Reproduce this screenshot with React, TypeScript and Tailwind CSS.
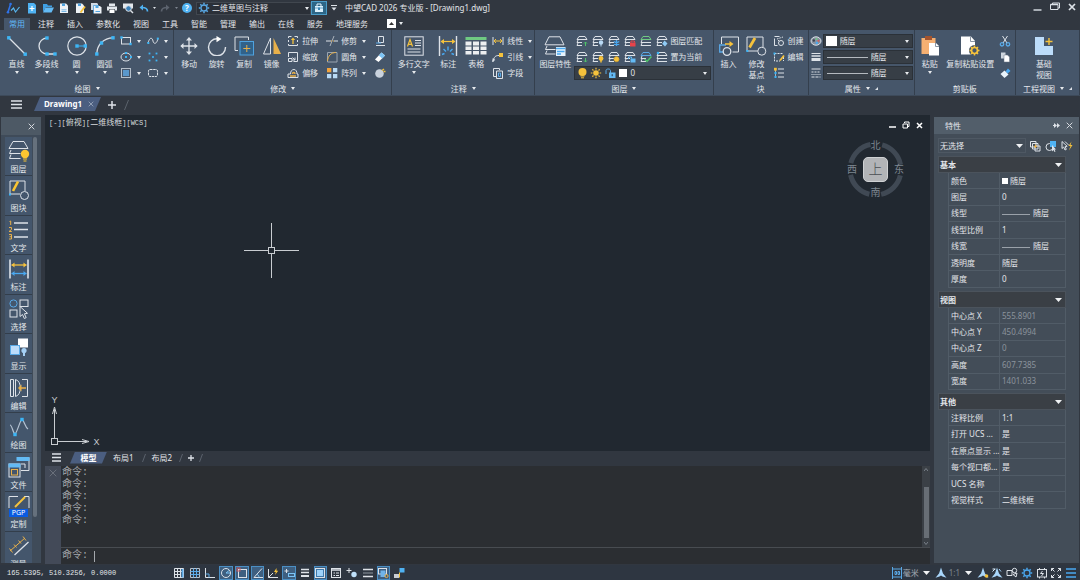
import React from 'react';

type Kids = { children?: React.ReactNode };

const W = '#dde2e8';
const B = '#3db5f5';
const L = '#5aa9e6';
const Y = '#f5c23c';
const O = '#e8b04a';

function Ic({ w, h, children }: Kids & { w: number; h?: number }) {
  const hh = h ?? w;
  return (
    <svg width={w} height={hh} viewBox={`0 0 ${w} ${hh}`} fill="none" stroke={W} strokeWidth="1" className="shrink-0" aria-hidden="true">
      {children}
    </svg>
  );
}

const Down = () => (
  <svg width="4" height="3" viewBox="0 0 4 3" className="shrink-0" aria-hidden="true">
    <path d="M0 0h4L2 3z" fill="#e8ebee" />
  </svg>
);
const DownBig = () => (
  <svg width="7" height="4" viewBox="0 0 7 4" className="shrink-0" aria-hidden="true">
    <path d="M0 0h7L3.5 4z" fill="#f0f2f4" />
  </svg>
);
const Dot = ({ x, y, s = 3.4 }: { x: number; y: number; s?: number }) => (
  <rect x={x - s / 2} y={y - s / 2} width={s} height={s} fill={B} stroke="none" />
);
const Burger = ({ w = 11 }: { w?: number }) => (
  <Ic w={w} h={9}><path d={`M0 1h${w}M0 4.5h${w}M0 8h${w}`} strokeWidth="1.3" /></Ic>
);
const Close = ({ s = 7, c = '#d5d9de' }: { s?: number; c?: string }) => (
  <Ic w={s}><path d={`M.7.7L${s - 0.7} ${s - 0.7}M${s - 0.7}.7L.7 ${s - 0.7}`} stroke={c} /></Ic>
);
const rays = 'M6 .8v1.700M6 9.500v1.700M.8 6h1.700M9.500 6h1.700M2.300 2.300l1.200 1.200M8.500 8.500l1.200 1.200M9.700 2.300L8.500 3.500M3.500 8.500L2.300 9.700';
const Gear = ({ c = L }: { c?: string }) => (
  <Ic w={12}><circle cx="6" cy="6" r="3" stroke={c} strokeWidth="1.300" /><path d={rays} stroke={c} strokeWidth="1.500" /></Ic>
);

/* ---------- ribbon building blocks ---------- */

function Big({ w, label, arrow, children }: Kids & { w: string; label: string[]; arrow?: boolean }) {
  return (
    <button type="button" className={`flex shrink-0 flex-col items-center pt-[3px] ${w}`}>
      {children}
      <span className="mt-[2px] flex flex-col leading-[11px]">
        {label.map((t) => <span key={t}>{t}</span>)}
      </span>
      {arrow && <span className="mt-[2px]"><Down /></span>}
    </button>
  );
}

function Small({ label, name, arrow, children }: Kids & { label?: string; name?: string; arrow?: boolean }) {
  return (
    <button type="button" aria-label={label ?? name} className="flex h-4 shrink-0 items-center gap-[3px] px-[2px]">
      {children}
      {label && <span>{label}</span>}
      {arrow && <span className="pl-[2px]"><Down /></span>}
    </button>
  );
}

function Group({ basis, title, arrow, corner, children }: Kids & { basis: string; title: string; arrow?: boolean; corner?: boolean }) {
  return (
    <section aria-label={title} className={`flex shrink-0 grow flex-col border-r border-[#343f4d] pt-[3px] ${basis}`}>
      <div className="flex h-12 pl-px">{children}</div>
      <div className="flex h-[14px] items-center justify-center gap-[5px] pt-px">
        <span>{title}</span>
        {arrow && <Down />}
        {corner && <Ic w={3}><path d="M3 0v3H0z" fill={W} stroke="none" /></Ic>}
      </div>
    </section>
  );
}
const Col = ({ w = '', children }: Kids & { w?: string }) => <div className={`flex shrink-0 flex-col ${w}`}>{children}</div>;

/* Layer stack in a 12 x 12 box, with room for a badge at the lower right */
const Stack = ({ name, top = W, children }: Kids & { name: string; top?: string }) => (
  <button type="button" aria-label={name} className="flex h-4 w-4 items-center justify-center">
    <Ic w={12}>
      <path d="M3 1.500h6l2 3H1z" stroke={top} />
      <path d="M2 5L1 7.500h5M2 8L1 10.500h5" stroke={W} />
      {children}
    </Ic>
  </button>
);

function Combo({ label, value, children }: Kids & { label: string; value: string }) {
  return (
    <label className="flex h-[14px] min-w-0 grow items-center gap-[3px] border border-[#2b3138] bg-[#373e46] px-[3px]">
      {children}
      <select aria-label={label} defaultValue={value} className="min-w-0 grow appearance-none bg-transparent text-[8px] leading-[10px] text-[#e3e6ea] outline-none">
        <option>{value}</option>
      </select>
      <Down />
    </label>
  );
}

/* ---------- title bar ---------- */

function TitleBar() {
  return (
    <header className="flex h-4 shrink-0 items-center justify-between">
      <div className="flex items-center">
        <div className="flex w-[26px] justify-center">
          <Ic w={14} h={12}>
            <path d="M2 10L4.500 2.500" stroke="#2f73e8" strokeWidth="1.6" />
            <path d="M5 8.500L7.500 6l2 4L13.500 5" stroke="#58b7f0" strokeWidth="1.2" />
            <circle cx="2" cy="10.300" r="1.300" fill="#2f73e8" stroke="none" />
            <circle cx="4.600" cy="2" r="1.300" fill="#2f73e8" stroke="none" />
          </Ic>
        </div>
        <div className="flex items-center gap-1">
          <button type="button" aria-label="新建"><Ic w={12}><path d="M2 1h6l2 2v8.500H2z" fill="#4fb2f2" stroke="none" /><path d="M6 4v5M3.500 6.500h5" stroke="#fff" strokeWidth="1.200" /></Ic></button>
          <button type="button" aria-label="打开"><Ic w={12}><path d="M1 10V2h4l1 1.500h4V5H4z" fill="#3e9fe4" stroke="none" /><path d="M3.500 5.500H12L9.500 10.500H1z" fill="#63baf4" stroke="none" /></Ic></button>
          <button type="button" aria-label="保存"><Ic w={12}><path d="M2 1.500h6l2 2v7.500H2z" fill="#eef2f6" stroke="none" /><path d="M4 1.500h3v2.500H4zM3.500 7.500h5v.8h-5zM3.500 9h5v.8h-5z" fill="#4fa3e0" stroke="none" /></Ic></button>
          <button type="button" aria-label="另存为"><Ic w={12}><path d="M2 1.500h6l2 2v7.500H2z" fill="#eef2f6" stroke="none" /><path d="M4 1.500h3v2.500H4z" fill="#4fa3e0" stroke="none" /><path d="M11 4.500L6.500 10.500" stroke={Y} strokeWidth="1.800" /></Ic></button>
          <button type="button" aria-label="全部保存"><Ic w={12}><path d="M1 1h6l1 1v6H1z" fill="#cfd9e4" stroke="none" /><path d="M4 4h6l1.500 1.500v6H4z" fill="#eef2f6" stroke="none" /><path d="M5.500 4h3v2h-3zM5.500 9h4.500v1H5.500z" fill="#4fa3e0" stroke="none" /><path d="M3.500 11.500v-8H9" stroke="#4fa3e0" strokeWidth=".8" /></Ic></button>
          <button type="button" aria-label="打印"><Ic w={12}><path d="M3 1.500h6V4H3zM1 4.500h10v4H9V7H3v1.500H1z" fill="#e3e7ec" stroke="none" /><path d="M3.500 7.500h5v3.500h-5z" fill="#fff" stroke="none" /></Ic></button>
          <button type="button" aria-label="打印预览"><Ic w={12}><path d="M1 1.500h10v5H1z" fill="#e3e7ec" stroke="none" /><circle cx="6.500" cy="6.500" r="2.800" fill="#3b7fb8" /><path d="M8.500 8.500l2.500 2.500" strokeWidth="1.400" /></Ic></button>
          <button type="button" aria-label="放弃" className="flex items-center gap-1"><Ic w={11} h={12}><path d="M9.500 9.500C9.500 6.500 7.500 5.500 4 5.500" stroke="#4fb2f2" strokeWidth="1.700" /><path d="M5 2.500L1.500 5.500l3.500 3z" fill="#4fb2f2" stroke="none" /></Ic><Ic w={3} h={2}><path d="M0 0h3L1.500 2z" fill={W} stroke="none" /></Ic></button>
          <button type="button" aria-label="重做" className="flex items-center gap-1"><Ic w={11} h={12}><path d="M1.500 9.500C1.500 6.500 3.500 5.500 7 5.500" stroke="#5c636e" strokeWidth="1.700" /><path d="M6 2.500L9.500 5.500 6 8.500z" fill="#5c636e" stroke="none" /></Ic><Ic w={3} h={2}><path d="M0 0h3L1.500 2z" fill="#7d848e" stroke="none" /></Ic></button>
          <button type="button" aria-label="帮助" className="flex h-[10px] w-[10px] items-center justify-center rounded-full bg-[#4fb2f2] text-[8px] font-bold leading-none text-white">?</button>
          <label className="flex h-[13px] w-[115px] items-center gap-[2px] border border-[#41474f] bg-[#2b3038] px-px">
            <Gear />
            <select aria-label="工作空间" defaultValue="二维草图与注释" className="min-w-0 grow appearance-none bg-transparent text-[8px] leading-[10px] outline-none">
              <option>二维草图与注释</option>
            </select>
            <Down />
          </label>
        </div>
        <button type="button" aria-label="工具箱" className="flex h-[14px] w-4 items-center justify-center border border-[#4a9cc8] bg-[#2d6687]">
          <Ic w={10}><path d="M3 3V1h4v2" stroke="#e8f6ff" /><path d="M1 3h8v6H1z" fill="#d8effc" stroke="none" /><path d="M1 5h8" stroke="#3a86b5" strokeWidth=".7" /><path d="M4 4.500h2V7H4z" fill="#3a86b5" stroke="none" /></Ic>
        </button>
        <button type="button" aria-label="自定义" className="flex w-[18px] flex-col items-center pr-2 pl-[3px]"><Ic w={6} h={6}><path d="M0 .5h6" /><path d="M.5 2.500h5L3 5.500z" fill={W} stroke="none" /></Ic></button>
        <h1 className="text-[8px]">中望CAD 2026 专业版 - [Drawing1.dwg]</h1>
      </div>
      <div className="flex items-center gap-2 pr-1 pb-[3px]">
        <button type="button" aria-label="最小化"><Ic w={9}><path d="M.5 8h8" strokeWidth="1.400" /></Ic></button>
        <button type="button" aria-label="还原"><Ic w={10} h={9}><path d="M2.500 2.500V1H9.500v5H8M.5 2.500h7.500v5H.5z" /><path d="M.5 2.500h7.500" strokeWidth="1.500" /></Ic></button>
        <button type="button" aria-label="关闭"><Ic w={8}><path d="M1 1l6 6M7 1L1 7" strokeWidth="1.700" /></Ic></button>
      </div>
    </header>
  );
}

const TABS = ['常用', '注释', '插入', '参数化', '视图', '工具', '智能', '管理', '输出', '在线', '服务', '地理服务'];

function RibbonTabs() {
  return (
    <nav className="flex h-[14px] shrink-0 items-end gap-[3px] pl-1">
      {TABS.map((t, i) => (
        <button key={t} type="button" className={i === 0 ? 'h-3 bg-[#46566a] px-[5px] leading-3 text-[#5fb8f7]' : 'h-3 px-[5px] leading-3'}>{t}</button>
      ))}
      <button type="button" aria-label="最小化功能区" className="ml-[11px] flex items-center gap-[3px] pb-[2px]">
        <Ic w={9} h={9}><rect width="9" height="9" fill="#fff" stroke="none" /><path d="M4.500 3L7 6H2z" fill="#333" stroke="none" /></Ic>
        <Down />
      </button>
    </nav>
  );
}

/* ---------- ribbon ---------- */

function Ribbon() {
  return (
    <div className="flex h-[66px] shrink-0 border-b border-[#3d4a5a] bg-[#46566a] pl-px">
      <Group basis="basis-[173px]" title="绘图" arrow>
        <Big w="w-[29px]" label={['直线']} arrow><Ic w={20}><path d="M1.500 1.500l17 17" strokeWidth="1.300" /><Dot x={1.8} y={1.8} /><Dot x={18.2} y={18.2} /></Ic></Big>
        <Big w="w-[31px]" label={['多段线']} arrow><Ic w={20}><path d="M10 2A8 8 0 0 0 10 18H18" strokeWidth="1.300" /><Dot x={10} y={2} /><Dot x={10} y={18} /><Dot x={18} y={18} /></Ic></Big>
        <Big w="w-[29px]" label={['圆']} arrow><Ic w={20}><circle cx="10" cy="10" r="9.200" strokeWidth="1.200" /><path d="M10 10h8" stroke={B} /><Dot x={10} y={10} /><Dot x={18.3} y={10} /></Ic></Big>
        <Big w="w-[27px]" label={['圆弧']} arrow><Ic w={20}><path d="M1.800 18C2 8 9 2 18 1.800" strokeWidth="1.300" /><Dot x={1.8} y={18} /><Dot x={6.5} y={7} /><Dot x={18} y={1.8} /></Ic></Big>
        <Col w="w-[27px]">
          <Small name="矩形" arrow><Ic w={12}><rect x="1.500" y="2.500" width="9" height="6.500" /><Dot x={1.5} y={2.5} s={2.4} /><Dot x={10.5} y={9} s={2.4} /></Ic></Small>
          <Small name="椭圆" arrow><Ic w={12}><ellipse cx="6" cy="6" rx="5" ry="4" /><Dot x={6} y={6} s={2} /><Dot x={6} y={2} s={2} /><Dot x={11} y={6} s={2} /></Ic></Small>
          <Small name="填充" arrow><Ic w={12}><rect x="1.500" y="1.500" width="9" height="9" stroke="#b6c0cb" /><rect x="3" y="3" width="6" height="6" fill="#5a98cc" stroke="none" /></Ic></Small>
        </Col>
        <Col>
          <Small name="样条曲线" arrow><Ic w={12}><path d="M1 8C3 1 5.500 3 6 6S9.500 10 11 3.500" /><Dot x={1.3} y={8} s={2} /><Dot x={10.800} y={3.600} s={2} /></Ic></Small>
          <Small name="点" arrow><Ic w={12}><Dot x={2.5} y={2.500} s={1.800} /><Dot x={6} y={6} s={1.800} /><Dot x={9.500} y={2.500} s={1.800} /><Dot x={2.500} y={9.500} s={1.800} /><Dot x={9.500} y={9.500} s={1.800} /></Ic></Small>
          <Small name="修订云线" arrow><Ic w={12}><rect x="1.500" y="2.500" width="9" height="7" rx="1.500" strokeDasharray="2.500 .7" /></Ic></Small>
        </Col>
      </Group>

      <Group basis="basis-[218px]" title="修改" arrow>
        <Big w="w-[28px]" label={['移动']}><Ic w={18} h={20}><path d="M9 2.500v15M1.500 10h15" strokeWidth="1.300" /><path d="M6 4.500L9 1l3 3.500zM6 15.500L9 19l3-3.500zM3.500 7L.3 10l3.200 3zM14.500 7l3.200 3-3.200 3z" fill={W} stroke="none" /></Ic></Big>
        <Big w="w-[27px]" label={['旋转']}><Ic w={20}><path d="M10.500 2.800A8.500 8.500 0 1 0 18.500 11" strokeWidth="1.400" /><path d="M9.500 0l5 3-5 3.200z" fill="#fff" stroke="none" /></Ic></Big>
        <Big w="w-[28px]" label={['复制']}><Ic w={20}><path d="M4 14.500H1V1h13.500v3" /><rect x="6" y="5.500" width="13.500" height="13.500" fill="#31628a" stroke="#4fa3e0" /><path d="M12.800 9v7M9.300 12.500h7" stroke={O} /></Ic></Big>
        <Big w="w-[27px]" label={['镜像']}><Ic w={20}><path d="M8.500 2v16h-7z" /><path d="M11.500 2v16h7.500z" fill={O} stroke="none" /></Ic></Big>
        <Col w="w-[39px]">
          <Small label="拉伸"><Ic w={12}><path d="M1.500 3V1.500h3M7.500 1.500h3V3M1.500 9v1.500h9V9M1.500 5v2M10.500 5v2" /><path d="M6 9V4" stroke={Y} strokeWidth="1.300" /><path d="M3.800 5L6 2.500 8.200 5z" fill={Y} stroke="none" /></Ic></Small>
          <Small label="缩放"><Ic w={12}><path d="M1.500 6V1.500h9v9H6.500" /><path d="M1.500 7.500h3.500v3H1.500zM5.500 6.500l2.500 2.500M8 6.500V9H5.500" /></Ic></Small>
          <Small label="偏移"><Ic w={12}><path d="M1 10.500V7h2.500C3.500 4 5 2.500 7 2.500s3 2 3 4.500h1v3.500z" /><path d="M3 9h6M5.500 7c0-2 2.500-2 2.500 0" stroke={O} strokeWidth="1.400" /></Ic></Small>
        </Col>
        <Col w="w-[48px]">
          <Small label="修剪" arrow><Ic w={12}><path d="M0 6h5M8 6h4" /><path d="M4 11L8 1" stroke="#aab2bc" /><path d="M5 6h3" stroke={O} strokeDasharray="1 1" /></Ic></Small>
          <Small label="圆角" arrow><Ic w={12}><path d="M1.500 11V1.500M1.500 1.500H11M1.500 11H11V1.500" stroke="#9aa5b1" /><path d="M1.500 10C2 5 5 1.500 10 1.500" stroke={O} /></Ic></Small>
          <Small label="阵列" arrow><Ic w={12}><rect x="1" y="1" width="4.300" height="4.300" fill="#f2a33c" stroke="none" /><path d="M7 1h4.300v4.300H7zM1 7h4.300v4.300H1zM7 7h4.300v4.300H7z" fill="#b9daf5" stroke="none" /></Ic></Small>
        </Col>
        <Col>
          <Small name="对齐"><Ic w={12}><path d="M4.500 1.500h5v6h-5zM2 10.500h9" /><path d="M2 8h5" stroke={L} /></Ic></Small>
          <Small name="删除"><Ic w={12}><path d="M1 8.500L7.500 1.500l3.500 3L4.500 11z" fill="#fff" stroke="none" /><path d="M4.800 4.400L7.500 1.500l3.500 3-2.700 2.900z" fill="#7cc4f5" stroke="none" /></Ic></Small>
          <Small name="分解"><Ic w={12}><circle cx="5.500" cy="6.500" r="4.300" fill="#c9d2dd" stroke="none" /><path d="M8 3.500l2-1.500M9.500 4.500h2" stroke={Y} strokeWidth="1.500" /></Ic></Small>
        </Col>
      </Group>

      <Group basis="basis-[143px]" title="注释" arrow>
        <Big w="w-[41px]" label={['多行文字']} arrow><Ic w={20}><rect x=".800" y=".800" width="18.400" height="18.400" /><path d="M3.500 10.500L6 3.500l2.500 7M4.500 8.300h3" stroke={Y} strokeWidth="1.200" /><path d="M11 4.500h6M11 7h6M11 9.500h6M3.500 13h13M3.500 16h13" /></Ic></Big>
        <Big w="w-[28px]" label={['标注']}><Ic w={20}><path d="M1.500 0v20M18.500 0v20" strokeWidth="1.400" /><path d="M3 5.500h14" stroke={Y} strokeWidth="1.200" /><path d="M6 3L2.500 5.500 6 8zM14 3l3.500 2.500L14 8z" fill={Y} stroke="none" /><path d="M4 18.500l2.500-1M5.500 13l2.500 2.500M10 10.500v4M14.500 13L12 15.500M16 18.500l-2.500-1" stroke="#4aa8f0" strokeWidth="1.400" /></Ic></Big>
        <Big w="w-[28px]" label={['表格']}><Ic w={22} h={20}><rect x=".5" y="1" width="21" height="3" fill="#6fca82" stroke="none" /><path d="M.5 5.500h6v4h-6zM8 5.500h6v4H8zM15.500 5.500h6v4h-6zM.5 10.500h6v3.500h-6zM8 10.500h6v3.500H8zM15.500 10.500h6v3.500h-6zM.5 15h6v3.500h-6zM8 15h6v3.500H8zM15.500 15h6v3.500h-6z" fill="#eceef0" stroke="none" /></Ic></Big>
        <Col>
          <Small label="线性" arrow><Ic w={12}><path d="M1 2v8M11 2v8" /><path d="M2 6h8" stroke={Y} /><path d="M4 4L2 6l2 2M8 4l2 2-2 2" stroke={Y} /></Ic></Small>
          <Small label="引线" arrow><Ic w={12}><path d="M1 11C2 5.500 3.500 4.500 7 4.500" /><path d="M0 11l.8-4 2.500 2z" fill={W} stroke="none" /><rect x="7" y="2" width="4" height="4" fill={Y} stroke="none" /></Ic></Small>
          <Small label="字段"><Ic w={12}><path d="M4 9.500H1.500v-8h6V3" /><path d="M4.500 4H10.500v7.500h-6z" /><path d="M6.500 6h2v3.500h-2z" stroke={L} /></Ic></Small>
        </Col>
      </Group>

      <Group basis="basis-[178px]" title="图层" arrow>
        <Big w="w-[38px]" label={['图层特性']}>
          <Ic w={22} h={20}>
            <path d="M5 .8h11l4 8H1z" />
            <path d="M3 10L1.500 13.500h10M3 14.500L1.500 18h10" />
            <rect x="12" y="11" width="9.500" height="9" fill="#e6f3fd" stroke="none" />
            <path d="M12 12.500h9.500M13 15.500h7.500M13 18h4" stroke="#4aa8f0" strokeWidth="1.500" />
          </Ic>
        </Big>
        <div className="flex min-w-0 grow flex-col pr-[2px]">
          <div className="flex items-center">
            <Stack name="上一个图层"><path d="M9.500 11V7M8 8.500L9.500 7 11 8.500" stroke="#4fc46a" /></Stack>
            <Stack name="关闭图层"><circle cx="9" cy="7.500" r="2.200" fill="#b9daf5" stroke="none" /><path d="M9 9v2.500" stroke="#b9daf5" /></Stack>
            <Stack name="冻结图层"><path d="M8.500 5v6M5.800 6.500l5.400 3M11.200 6.500l-5.400 3" stroke="#4aa8f0" strokeWidth="1.400" /></Stack>
            <Stack name="锁定图层"><rect x="6" y="7.500" width="5.500" height="4" fill="#e8434a" stroke="none" /><path d="M7 7.500V6h3.500v1.500" stroke="#e8434a" /></Stack>
            <Stack name="移至当前图层" top="#6fca82"><path d="M6 7.500h5M6 10.500h5" /></Stack>
            <Stack name="图层匹配"><path d="M8.500 5.500l3 3L9 11.500 6.200 8.700z" fill="#8fcbf5" stroke="none" /></Stack>
            <span className="whitespace-nowrap">图层匹配</span>
          </div>
          <div className="flex items-center">
            <Stack name="图层状态"><path d="M9.500 7v4M8 9.500l1.500 1.500L11 9.500" stroke="#4fc46a" /></Stack>
            <Stack name="打开图层"><circle cx="9" cy="7.500" r="2.400" fill={Y} stroke="none" /><path d="M9 9v2.500" stroke={Y} strokeWidth="1.500" /></Stack>
            <Stack name="解冻图层"><circle cx="8.500" cy="8.200" r="2.600" fill={Y} stroke="#b98d2c" strokeDasharray="1 1" /></Stack>
            <Stack name="解锁图层"><rect x="6.500" y="7.500" width="5" height="4" fill="#63baf4" stroke="none" /><path d="M4.500 8V6h3v1.500" stroke="#63baf4" /></Stack>
            <Stack name="隔离图层" top={L}><path d="M4.500 8L7 10.500l4.500-5" stroke="#4fc46a" strokeWidth="1.500" /></Stack>
            <Stack name="置为当前图层"><path d="M6 7.500h5M6 10.500h5" /><circle cx="2" cy="2" r="1.300" fill={B} stroke="none" /></Stack>
            <span className="whitespace-nowrap">置为当前</span>
          </div>
          <div className="flex h-4 items-center">
            <Combo label="当前图层" value="0">
              <Ic w={9} h={12}><circle cx="4.500" cy="5" r="4" fill={Y} stroke="none" /><path d="M2.500 9h4M3 10.800h3" stroke={Y} /></Ic>
              <Ic w={12}><circle cx="6" cy="6" r="2.800" fill={Y} stroke="none" /><path d={rays} stroke={Y} strokeWidth="1.200" /></Ic>
              <Ic w={11} h={12}><path d="M1 7V3.500C1 1.500 5.500 1.500 5.500 3.500V6" stroke={L} /><rect x="4" y="5.500" width="6.500" height="5.500" fill="#63baf4" stroke="none" /><path d="M7.200 7.200v2" stroke="#234" /></Ic>
              <span className="h-2 w-2 shrink-0 bg-white" />
            </Combo>
          </div>
        </div>
      </Group>

      <Group basis="basis-[95px]" title="块">
        <Big w="w-[28px]" label={['插入']}><Ic w={20}><path d="M2.500 8V1h17v15h-6" /><path d="M5 16H.700V9H7" stroke={L} strokeWidth="1.300" /><path d="M6 8h6" stroke={Y} strokeWidth="1.500" /><path d="M10.500 5l4 3-4 3z" fill={Y} stroke="none" /><circle cx="8" cy="15.500" r="3.800" fill="#46566a" strokeWidth="1.300" /></Ic></Big>
        <Big w="w-[28px]" label={['修改', '基点']}><Ic w={21} h={20}><path d="M1 15V1h16v10M1 15h11" /><circle cx="15.800" cy="15.200" r="4" fill="#46566a" /><path d="M3.500 11.500L9 2" stroke={Y} strokeWidth="2.800" /><Dot x={1.3} y={15} s={2} /></Ic></Big>
        <Col>
          <Small label="创建"><Ic w={12}><path d="M1.500 1.500h5M1.500 3.500V10.500h3" /><path d="M4 4l6-2" strokeDasharray="1.500 1" /><circle cx="8" cy="8" r="2.500" /><path d="M6.200 6.200L5 5" /></Ic></Small>
          <Small label="编辑"><Ic w={12}><path d="M1.500 2.500h8M1.500 2.500v7.500H7M10.500 6v4" strokeDasharray="2 1" /><path d="M11 4.500L7 9.500" stroke={Y} strokeWidth="1.800" /><Dot x={1.5} y={2.5} s={2} /></Ic></Small>
          <Small name="属性"><Ic w={12}><path d="M5 2h6M5 6h6M5 10h6" /><path d="M2.500 3v8" stroke="#a8b2bd" /><Dot x={2.500} y={6} s={2} /><Dot x={2.500} y={10} s={2} /><rect x="1" y=".8" width="2.800" height="2.800" fill={Y} stroke="none" /></Ic></Small>
        </Col>
      </Group>

      <Group basis="basis-[106px]" title="属性" arrow corner>
        <div className="flex grow flex-col pr-[1px]">
          <div className="flex h-4 items-center gap-[1px]">
            <Ic w={12}><ellipse cx="6" cy="6" rx="5" ry="4.200" fill="#8791a0" /><circle cx="3.800" cy="5.500" r="1.200" fill="#3a4250" stroke="none" /><circle cx="6.500" cy="4" r="1" fill="#6fca82" stroke="none" /><circle cx="8.500" cy="5.800" r="1" fill="#d65a5a" stroke="none" /><circle cx="6.800" cy="8" r="1.200" fill="#4aa8f0" stroke="none" /></Ic>
            <Combo label="颜色" value="随层"><span className="-ml-[1px] h-[10px] w-[11px] shrink-0 bg-white" /></Combo>
          </div>
          <div className="flex h-4 items-center gap-[1px]">
            <Ic w={12}><path d="M1.500 2.500h9" /><path d="M1.500 5h9" strokeWidth="1.500" /><path d="M1.500 8.500h9" strokeWidth="3" /></Ic>
            <Combo label="线宽" value="随层"><span className="h-px w-[41px] shrink-0 bg-[#b4b9bf]" /></Combo>
          </div>
          <div className="flex h-4 items-center gap-[1px]">
            <Ic w={12}><path d="M1.500 2h9" /><path d="M1.500 5h9" strokeDasharray="2 1" /><path d="M1.500 7.500h9" strokeDasharray="1 1" /><path d="M1.500 10h9" strokeDasharray="3 1" /></Ic>
            <Combo label="线型" value="随层"><span className="h-px w-[41px] shrink-0 bg-[#b4b9bf]" /></Combo>
          </div>
        </div>
      </Group>

      <Group basis="basis-[101px]" title="剪贴板">
        <Big w="w-[28px]" label={['粘贴']} arrow><Ic w={20}><rect x="1.500" y="2" width="14" height="16" fill="#f5b072" stroke="none" /><rect x="5" y="0" width="7" height="4" fill="#a3542e" stroke="none" /><path d="M9 7h7l3 3v9.500H9z" fill="#fff" stroke="none" /><path d="M15.500 7v3.500H19" stroke="#8995a3" /></Ic></Big>
        <Big w="w-[53px]" label={['复制粘贴设置']}><Ic w={20}><path d="M1 .5h10L15 5v13.500H1z" fill="#fff" stroke="none" /><path d="M10.500.5v5H15" stroke="#8995a3" /><circle cx="14.500" cy="14.500" r="5.500" fill="#46566a" stroke="none" /><circle cx="14.500" cy="14.500" r="3" stroke={Y} strokeWidth="1.700" /><path d="M14.500 9.500v1.800M14.500 17.700v1.800M9.500 14.500h1.800M17.700 14.500h1.800M11 11l1.300 1.300M16.700 16.700L18 18M18 11l-1.300 1.300M12.300 16.700L11 18" stroke={Y} strokeWidth="1.500" /></Ic></Big>
        <Col>
          <Small name="剪切"><Ic w={12}><path d="M3.500 1l4.500 7M8.500 1L4 8" /><circle cx="3" cy="9.300" r="1.700" stroke={L} strokeWidth="1.300" /><circle cx="9" cy="9.300" r="1.700" stroke={L} strokeWidth="1.300" /></Ic></Small>
          <Small name="复制"><Ic w={12}><path d="M2 1.500h4.500v6H2z" fill="#cfd6de" stroke="none" /><path d="M5 4h3.500l2 2v5H5z" fill="#fff" stroke="#6b7786" strokeWidth=".500" /></Ic></Small>
          <Small name="特性匹配"><Ic w={12}><path d="M6.500 4.500L9 1.500l2.500 2.500-3 2.500z" fill="#4aa8f0" stroke="none" /><path d="M5.500 3.500l4 4-4 3.500L1.500 7z" fill="#eaf4fc" stroke="none" /></Ic></Small>
        </Col>
      </Group>

      <Group basis="basis-[64px]" title="工程视图" arrow corner>
        <Big w="w-[54px]" label={['基础', '视图']}><Ic w={20}><path d="M1 1h9v9h9v9H1z" fill="#bcdcfa" stroke="none" /><path d="M15 2v7M11.500 5.500h7" stroke={Y} strokeWidth="1.400" /></Ic></Big>
      </Group>
    </div>
  );
}

/* ---------- drawing tabs ---------- */

function DocTabs() {
  return (
    <div className="flex h-[18px] shrink-0 items-start pt-px pl-[11px]">
      <button type="button" aria-label="文件列表" className="flex h-[15px] items-center"><Burger /></button>
      <div className="ml-3 flex h-[14px] w-[67px] items-center gap-[6px] bg-[#4b5e80] pl-[10px] [clip-path:polygon(6px_0,100%_0,calc(100%_-_6px)_100%,0_100%)]">
        <button type="button" className="font-bold text-white">Drawing1</button>
        <button type="button" aria-label="关闭 Drawing1"><Close s={6} c="#8f9db3" /></button>
      </div>
      <button type="button" aria-label="新建图形" className="ml-[7px] flex h-[15px] items-center"><Ic w={8}><path d="M4 0v8M0 4h8" strokeWidth="1.500" /></Ic></button>
      <span className="flex h-[15px] items-center pl-2"><Ic w={5} h={10}><path d="M4.500 0L.5 10" stroke="#5b626c" /></Ic></span>
    </div>
  );
}

/* ---------- left tool palette ---------- */

const PALETTE: { label: string; icon: React.ReactNode }[] = [
  { label: '图层', icon: <><path d="M5 1.500h11l4 7H1z" /><path d="M3 10L1.500 13.500h11M3 14.500L1.500 18.500h11" /><circle cx="17" cy="14" r="4.200" fill="#fbc531" stroke="none" /><path d="M15 19h4M15.500 21h3" stroke="#fbc531" /></> },
  { label: '图块', icon: <><path d="M2 15V2h15v10M2 15h10" /><circle cx="16.500" cy="16.500" r="4" fill="#44566c" /><path d="M5 12l5-9.500" stroke="#fbc531" strokeWidth="2.600" /><Dot x={2} y={15.500} s={2} /></> },
  { label: '文字', icon: <><path d="M6 4h14M6 10.500h14M6 18h14" strokeWidth="1.300" /><path d="M1.500 2.500L2.700 2v4M1 8.500h2.500v2L1 12.500h2.800M1 15.500h2.500v4.500H1M1.500 17.700h2" stroke={O} /></> },
  { label: '标注', icon: <><path d="M2 1.500v19M20 1.500v19" strokeWidth="1.600" /><path d="M3.500 7h15" stroke={Y} strokeWidth="1.300" /><path d="M6.500 4.500L3.500 7l3 2.500zM15.500 4.500l3 2.500-3 2.500z" fill={Y} stroke="none" /><path d="M3.500 15.500h15" stroke="#4aa8f0" strokeWidth="1.300" /><path d="M6.500 13l-3 2.500 3 2.500zM15.500 13l3 2.500-3 2.500z" fill="#4aa8f0" stroke="none" /></> },
  { label: '选择', icon: <><circle cx="5.500" cy="5.500" r="3.600" stroke={L} /><rect x="12" y="2" width="8" height="6.500" /><rect x="2" y="12" width="7" height="7" /><path d="M12 8.500v10l2.500-2 1.800 4 1.900-.9-1.800-3.800 3.100-.5z" fill="#44566c" /></> },
  { label: '显示', icon: <><rect x="10" y="1.500" width="10" height="9" fill="#fff" stroke="none" /><rect x="2.500" y="8.500" width="9" height="9" fill="#bcdcfa" stroke="#5aa9e6" /><circle cx="16" cy="13.500" r="2.600" fill="#a5d0f5" stroke="none" /><path d="M16 15v4" stroke="#a5d0f5" strokeWidth="2" /></> },
  { label: '编辑', icon: <><path d="M2.500 2.500h3v17h-3zM7.500 2.500C14 4 14 18 7.500 19.500zM14 2.500h5.500v17H14" /><path d="M18 11h-6" stroke={O} strokeWidth="1.500" /><path d="M13.500 7.500L10 11l3.500 3.500z" fill={O} stroke="none" /></> },
  { label: '绘图', icon: <><path d="M2 9C4 9 5 17 7 18C9 17 12 4 14 3.500C16 4 17 11 20 13" stroke="#b5c3d3" strokeWidth="1.200" /><Dot x={7} y={18.500} /><Dot x={14} y={3.500} /></> },
  { label: '文件', icon: <><path d="M9 1.500h12v13h-8" /><rect x="8.500" y="1" width="13" height="4" fill="#63baf4" stroke="none" /><path d="M13 8h4v4" /><rect x="1" y="8" width="11" height="13" fill="#44566c" /><rect x=".500" y="7.500" width="12" height="4" fill="#63baf4" stroke="none" /><rect x="3.500" y="13.500" width="6" height="5.500" stroke={O} /></> },
  { label: '定制', icon: <><path d="M1 13V1.500h9M16 1.500h5V13" /><path d="M7 12L17 2" stroke={Y} strokeWidth="2" /></> },
  { label: '测量', icon: <><path d="M2 16L17 3" stroke={O} /><path d="M1.500 13.500l3 4M6 9.500l2.500 3M10.500 5.500l2.500 3M15 1.500l3 4" stroke={O} /><path d="M6.500 20L20.500 7" strokeWidth="1.300" /></> },
];

function Palette() {
  return (
    <aside className="mt-[3px] mb-[2px] ml-px flex w-10 shrink-0 flex-col bg-[#3f4b59]">
      <div className="flex h-[18px] shrink-0 items-center justify-end bg-[#4d5965] pr-[6px]">
        <button type="button" aria-label="关闭面板"><Close s={7} /></button>
      </div>
      <div className="flex min-h-0 grow basis-0 overflow-hidden pt-[2px] pl-1">
        <div className="grid h-[434px] w-[27px] grid-rows-11">
          {PALETTE.map((p) => (
            <button key={p.label} type="button" className="relative flex flex-col items-center border-b border-[#333e4b] bg-[#44566c] pt-[3px]">
              <Ic w={22}>{p.icon}</Ic>
              {p.label === '定制' && <span className="absolute top-[17px] bg-[#0a5be0] px-[3px] text-[7px] leading-[8px] text-white">PGP</span>}
              <span className="mt-[2px] leading-[10px]">{p.label}</span>
            </button>
          ))}
        </div>
        <div className="mb-[46px] ml-px w-1 rounded-full bg-[#66717d]" />
      </div>
    </aside>
  );
}

/* ---------- canvas ---------- */

const MONO = "font-['Liberation_Mono','Noto_Sans_CJK_SC',monospace]";

function Canvas() {
  return (
    <main className="relative min-h-0 grow overflow-hidden bg-[#212830]">
      <div className={`flex h-4 items-center pl-1 text-[#d6dade] ${MONO}`}>
        {['-', '俯视', '二维线框', 'WCS'].map((t) => (
          <button key={t} type="button" className="flex items-center text-[7px] leading-[10px]">
            [<span className={t === '-' || t === 'WCS' ? 'text-[7px]' : 'text-[8px]'}>{t}</span>]
          </button>
        ))}
      </div>
      <div className="absolute top-[6px] right-[7px] flex items-center gap-[6px]">
        <button type="button" aria-label="最小化图形"><Ic w={7} h={8}><path d="M0 6h7" stroke="#fff" strokeWidth="1.500" /></Ic></button>
        <button type="button" aria-label="还原图形"><Ic w={8}><path d="M2.500 2V1H7v4.500H6M1 3h4.500v4H1z" stroke="#fff" /></Ic></button>
        <button type="button" aria-label="关闭图形"><Ic w={7}><path d="M1 1l5 5M6 1L1 6" stroke="#fff" strokeWidth="1.500" /></Ic></button>
      </div>
      <svg width="55" height="55" viewBox="0 0 55 55" className="absolute top-[108px] left-[199px]" fill="none" stroke="#c9cdd1" aria-hidden="true">
        <path d="M27.500 0v24M27.500 31v24M0 27.500h24M31 27.500h24" />
        <rect x="24.500" y="24.500" width="6" height="6" />
      </svg>
      <div className="absolute top-[26px] right-[26px] grid h-[57px] w-[57px] place-items-center font-['Liberation_Serif','Noto_Sans_CJK_SC',serif] text-[10px] leading-[10px] text-[#7e8790]">
        <svg width="57" height="57" viewBox="0 0 57 57" className="absolute inset-0" fill="none" stroke="#404954" strokeWidth="5" aria-hidden="true">
          <circle cx="28.500" cy="28.500" r="25.500" strokeDasharray="28 12.060" strokeDashoffset="-6.030" />
        </svg>
        <button type="button" className="absolute top-0">北</button>
        <button type="button" className="absolute bottom-0">南</button>
        <button type="button" className="absolute left-0">西</button>
        <button type="button" className="absolute right-0">东</button>
        <button type="button" className="relative h-[25px] w-[25px] rounded-[5px] border border-[#cfd1d3] bg-[#b2b4b7] text-[14px] font-light leading-none text-[#4b4f54]">上</button>
      </div>
      <svg width="56" height="56" viewBox="0 0 56 56" className="absolute bottom-0 left-[5px]" fill="none" stroke="#c9cdd1" aria-hidden="true">
        <rect x="1.500" y="43.500" width="6" height="6" />
        <path d="M4.500 43V14M7.500 46.500H37M2.500 19L4.500 12l2 7M32 44.500l7 2-7 2" />
        <text x="1.500" y="8" fontSize="9" fontFamily="Liberation Sans, sans-serif" fill="#c9cdd1" stroke="none">Y</text>
        <text x="43.500" y="50" fontSize="9" fontFamily="Liberation Sans, sans-serif" fill="#c9cdd1" stroke="none">X</text>
      </svg>
    </main>
  );
}

const Slash = () => <Ic w={4} h={8}><path d="M3.500 0L.5 8" stroke="#5b626c" /></Ic>;

function LayoutTabs() {
  return (
    <div className="flex h-[15px] shrink-0 items-center pb-[2px] pl-[7px]">
      <button type="button" aria-label="布局列表"><Burger w={9} /></button>
      <button type="button" className="ml-[9px] h-3 w-[37px] bg-[#4b5e80] font-bold leading-3 text-white [clip-path:polygon(5px_0,100%_0,calc(100%_-_5px)_100%,0_100%)]">模型</button>
      <button type="button" className="ml-[6px] mr-2">布局1</button>
      <Slash />
      <button type="button" className="mr-[7px] ml-[6px]">布局2</button>
      <Slash />
      <button type="button" aria-label="新建布局" className="mx-[5px]"><Ic w={6}><path d="M3 0v6M0 3h6" strokeWidth="1.300" /></Ic></button>
      <Slash />
    </div>
  );
}

function Command() {
  return (
    <section aria-label="命令行" className={`flex h-[98px] shrink-0 bg-[#2b2e32] text-[10px] leading-3 text-[#a4a8ad] ${MONO}`}>
      <div className="flex w-4 shrink-0 justify-center bg-[#434a58] pt-[3px]">
        <button type="button" aria-label="关闭命令行" className="h-2"><Close s={8} c="#6a707b" /></button>
      </div>
      <div className="flex min-w-0 grow flex-col">
        <div className="flex min-h-0 grow justify-between border-b border-[#484c51]">
          <div className="pt-px pl-px">
            {[0, 1, 2, 3, 4].map((n) => <p key={n}>命令:</p>)}
          </div>
          <div className="flex w-2 flex-col items-center justify-between bg-[#3b4046] py-[2px]">
            <Ic w={4} h={3}><path d="M0 3l2-2.500L4 3" stroke="#7b8189" /></Ic>
            <div className="mt-4 mb-1 w-[5px] grow bg-[#686e75]" />
            <Ic w={4} h={3}><path d="M0 0l2 2.500L4 0" stroke="#7b8189" /></Ic>
          </div>
        </div>
        <label className="flex h-4 items-center pl-px">
          命令:
          <span className="ml-[6px] h-[11px] w-px bg-[#a4a8ad]" />
          <input type="text" aria-label="命令" className="min-w-0 grow bg-transparent outline-none" />
        </label>
      </div>
    </section>
  );
}

/* ---------- properties ---------- */

const line = <span className="mr-[3px] inline-block h-px w-[28px] bg-[#9aa1a9] align-middle" />;
const SECTIONS: { title: string; tall: string; dim?: boolean; rows: [string, React.ReactNode][] }[] = [
  {
    title: '基本', tall: 'h-[115px]',
    rows: [
      ['颜色', <><span className="mr-[2px] inline-block h-[6px] w-[6px] bg-white" />随层</>],
      ['图层', '0'], ['线型', <>{line}随层</>], ['线型比例', '1'], ['线宽', <>{line}随层</>], ['透明度', '随层'], ['厚度', '0'],
    ],
  },
  { title: '视图', tall: 'h-[82px]', dim: true, rows: [['中心点 X', '555.8901'], ['中心点 Y', '450.4994'], ['中心点 Z', '0'], ['高度', '607.7385'], ['宽度', '1401.033']] },
  { title: '其他', tall: 'h-[99px]', rows: [['注释比例', '1:1'], ['打开 UCS ...', '是'], ['在原点显示 ...', '是'], ['每个视口都...', '是'], ['UCS 名称', ''], ['视觉样式', '二维线框']] },
];

function Properties() {
  return (
    <aside className="mt-[3px] mb-[2px] mr-px ml-1 flex w-[145px] shrink-0 flex-col overflow-hidden bg-[#434d58]">
      <div className="flex h-[17px] shrink-0 items-center bg-[#525e6a] pr-[6px] pl-[11px]">
        <h2 className="grow">特性</h2>
        <button type="button" aria-label="自动隐藏" className="mr-[6px]"><Ic w={7}><path d="M0 3.500h3" /><path d="M1 1l3 2.500L1 6zM4 1l3 2.500L4 6z" fill={W} stroke="none" /></Ic></button>
        <button type="button" aria-label="关闭特性"><Close s={7} /></button>
      </div>
      <div className="flex h-[22px] shrink-0 items-center pt-px pl-1">
        <label className="mr-[3px] flex h-[15px] w-[88px] items-center border border-[#4e5863] pr-[2px] pl-px">
          <select aria-label="选择集" defaultValue="无选择" className="min-w-0 grow appearance-none bg-transparent text-[8px] outline-none"><option>无选择</option></select>
          <DownBig />
        </label>
        <div className="flex gap-1">
          <button type="button" aria-label="切换 PICKADD"><Ic w={12}><path d="M1.500 1.500h5.500v5.500H1.500zM3.500 3.500H9V9H3.500zM6 6h5v5H6z" /><path d="M6.500 4.500v3.500M4.700 6.300h3.600" stroke={O} /></Ic></button>
          <button type="button" aria-label="选择对象"><Ic w={12}><circle cx="4.500" cy="7" r="3.500" /><rect x="5" y="1" width="6" height="6" fill="#4fb2f2" stroke="none" /><path d="M7 5v6.500l1.500-1.500 1 2 1-.5-1-2h1.500z" fill={W} stroke="none" /></Ic></button>
          <button type="button" aria-label="快速选择"><Ic w={12}><path d="M1 1.500v7l1.700-1.500 1.300 3 1.300-.6L4.200 6.500l2-.2zM4 1.500l4 4" /><path d="M10.500 1.500L7.500 6H9.500L8 10.500 11.500 5H9.500z" fill={Y} stroke="none" /></Ic></button>
        </div>
      </div>
      <div className="flex flex-col gap-[3px] pr-[13px] pl-1">
        {SECTIONS.map((s) => (
          <section key={s.title}>
            <button type="button" className="flex h-[17px] w-full items-center justify-between border border-[#4b535c] bg-[#3a3f45] pr-[3px] pl-px font-bold">
              {s.title}<DownBig />
            </button>
            <div className="pl-[10px]">
              <table className={`w-full table-fixed border-collapse ${s.tall}`}>
                <tbody>
                  {s.rows.map(([k, v]) => (
                    <tr key={k} className="border border-t-0 border-[#515c67]">
                      <th scope="row" className="w-[51px] border-r border-[#515c67] p-0 pl-[2px] text-left font-normal leading-[10px] whitespace-nowrap">{k}</th>
                      <td className={s.dim ? 'p-0 pl-[2px] leading-[10px] text-[#8b939c]' : 'p-0 pl-[2px] leading-[10px]'}>{v}</td>
                    </tr>
                  ))}
                </tbody>
              </table>
            </div>
          </section>
        ))}
      </div>
    </aside>
  );
}

/* ---------- status bar ---------- */

const TOGGLES: { name: string; on?: boolean; icon: React.ReactNode }[] = [
  { name: '捕捉', icon: <><path d="M1.500 1.500h9v9h-9zM4.500 1.500v9M1.500 4.500h9M1.500 7.500h6M7.500 1.500v9" /><path d="M9.500 2v8.500" stroke={L} strokeWidth="2" /></> },
  { name: '栅格', icon: <><path d="M1.500 1.500h9v9h-9z" stroke="#b9c2cc" /><path d="M4.500 1.500v9M7.500 1.500v9M1.500 4.500h9M1.500 7.500h9" stroke={L} /></> },
  { name: '正交', icon: <><path d="M1.500 1v9.500H11" /><path d="M1.500 7H5v3.500" stroke={L} /></> },
  { name: '极轴', on: true, icon: <><circle cx="6" cy="6" r="4.500" /><path d="M6 6l3-2.500M6 6h4" stroke="#7cc4f5" /></> },
  { name: '对象捕捉', on: true, icon: <><rect x="2.500" y="2.500" width="8" height="8" /><rect x="1" y="1" width="3" height="3" stroke="#c55a62" /></> },
  { name: '对象追踪', on: true, icon: <><path d="M10 1.500L2 10.500h9" /><path d="M5 7.500c1.500.5 2 1.500 2 3" stroke="#7cc4f5" /></> },
  { name: '动态 UCS', icon: <><path d="M1.500 2v8.500H11M1.500 10.500L6 6" /><path d="M9.500 1L7 5h1.800L8 8l3.200-4.300H9.500z" fill={Y} stroke="none" /></> },
  { name: '动态输入', on: true, icon: <><path d="M3.500 2v4M1.500 4h4" /><rect x="5.500" y="6.500" width="6" height="3" stroke="#7cc4f5" /></> },
  { name: '线宽', icon: <><path d="M2 2.500h8M2 5.500h8" strokeWidth="1.300" /><path d="M2 9h8" strokeWidth="2" /></> },
  { name: '透明度', on: true, icon: <><rect x="1.500" y="1.500" width="9" height="9" fill="#3f79ab" /><rect x="3" y="3" width="6" height="6" fill="#9ed2fa" stroke="none" /></> },
  { name: '快捷特性', icon: <><rect x="1.500" y="1.500" width="9" height="9" /><path d="M1.500 3h9" strokeWidth="1.500" /><path d="M3.500 6h1.500M6 6h3M3.500 8.500h1.500M6 8.500h3" /></> },
  { name: '循环选择', icon: <><path d="M3 1v5M.5 3.500h5" /><circle cx="8" cy="7.500" r="2.700" fill="#bfe0fa" stroke="none" /></> },
  { name: '注释监视', icon: <><path d="M1 2.500h10M1 9.500h10" strokeWidth="1.300" /><path d="M1 6h10" stroke="#8d96a0" /></> },
  { name: '图形预览', on: true, icon: <><rect x="1.500" y="1.500" width="8" height="5.500" /><rect x="3.500" y="3.500" width="5" height="6.500" fill="#6fb4ea" stroke="none" /><circle cx="9.500" cy="9" r="1.600" stroke={O} /></> },
  { name: '模型与布局', icon: <><rect x="6.500" y="1" width="5" height="4.500" fill="#4fb2f2" stroke="none" /><rect x="1" y="7" width="5" height="4" fill="#c9ced4" stroke="none" /><path d="M6.500 5.500v5" stroke={Y} /></> },
];

const Man = () => <path d="M6 .5L8 6.500l3.500 4.300L7.500 9.500 6 8.500 4.500 9.500.5 10.800 4 6.500z" fill="#a9d6fa" stroke="none" />;

function StatusBar() {
  return (
    <footer className="flex h-[15px] shrink-0 items-center justify-between bg-[#2e3641]">
      <div className="flex items-center">
        <output className={`w-[171px] pl-[7px] text-[7px] whitespace-pre ${MONO}`}>165.5395, 510.3256, 0.0000</output>
        <div className="grid w-[236px] grid-cols-15">
          {TOGGLES.map((t) => (
            <button key={t.name} type="button" aria-label={t.name} aria-pressed={!!t.on} className={t.on ? 'mx-px flex h-[14px] items-center justify-center border border-[#4b8fc4] bg-[#3e5f80]' : 'mx-px flex h-[14px] items-center justify-center'}>
              <Ic w={12}>{t.icon}</Ic>
            </button>
          ))}
        </div>
      </div>
      <div className="flex items-center gap-[2px] pr-[3px] text-[#a7adb5]">
        <button type="button" className="flex items-center gap-px"><Ic w={10} h={12}><path d="M.5 0v12M9.500 0v12M.5 2h9M.5 10h9M3 4.500h1.500v3H3zM6 4.500h1.500v3H6z" stroke={L} /></Ic>毫米<span className="pl-[3px]"><DownBig /></span></button>
        <button type="button" className="ml-[3px] flex items-center gap-[2px]"><Ic w={12}><Man /></Ic><span className="text-[#7e868f]">1:1</span><span className="pl-[3px]"><DownBig /></span></button>
        <button type="button" aria-label="注释可见性" className="ml-[3px]"><Ic w={12}><Man /><circle cx="9.500" cy="9" r="1.800" fill={Y} stroke="none" /></Ic></button>
        <button type="button" aria-label="自动缩放" className="mr-px"><Ic w={12}><Man /><path d="M1.500 2h3M1.500 4.500L4 2" stroke="#d9ecfb" /><path d="M8 2l2 2.500" stroke="#a9d6fa" /></Ic></button>
        <button type="button" aria-label="隔离对象" className="mr-px"><Ic w={12}><path d="M1 3.500h5v5H1z" /><circle cx="8.500" cy="3.500" r="2.200" /><path d="M7 7.500l4-1.500-1 4z" /></Ic></button>
        <button type="button" aria-label="设置" className="mr-px"><Gear c="#4aa8f0" /></button>
        <button type="button" aria-label="硬件加速"><Ic w={12}><rect x="1.500" y="2.500" width="9" height="7.500" /><path d="M3.500 1v1.500M8.500 1v1.500M3.500 10v1.500M8.500 10v1.500" /><path d="M6.500 4L4.500 6.500h3L5.500 9" /></Ic></button>
        <button type="button" aria-label="全屏" className="mr-px"><Ic w={12}><path d="M1.500 4V1.500H4M8 1.500h2.500V4M10.500 8v2.500H8M4 10.500H1.500V8M1.500 1.500l3 3M10.500 1.500l-3 3M10.500 10.500l-3-3M1.500 10.500l3-3" /></Ic></button>
        <button type="button" aria-label="自定义状态栏"><Ic w={12}><path d="M1 2h10M1 6h10M1 10h10" stroke="#4aa8f0" strokeWidth="1.400" /></Ic></button>
      </div>
    </footer>
  );
}

export default function App() {
  return (
    <div className="flex h-screen flex-col overflow-hidden bg-[#313740] font-['Noto_Sans','Noto_Sans_CJK_SC',sans-serif] text-[8px] leading-[10px] text-[#e3e6ea]">
      <TitleBar />
      <RibbonTabs />
      <Ribbon />
      <DocTabs />
      <div className="flex min-h-0 grow basis-0">
        <Palette />
        <div className="ml-1 flex min-w-0 grow flex-col pt-px pb-px">
          <Canvas />
          <LayoutTabs />
          <Command />
        </div>
        <Properties />
      </div>
      <StatusBar />
    </div>
  );
}
